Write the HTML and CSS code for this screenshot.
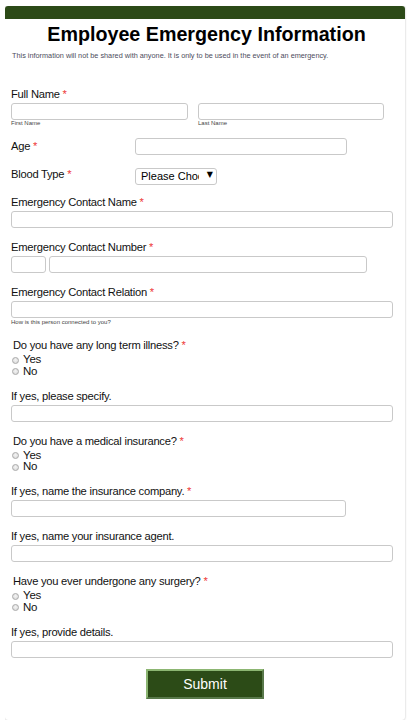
FILE: index.html
```html
<!DOCTYPE html>
<html lang="en">
<head>
<meta charset="utf-8">
<title>Employee Emergency Information</title>
<link rel="stylesheet" href="styles.css">
</head>
<body>
<form class="card">
  <div class="topbar"></div>
  <div class="content">
    <h1 class="title">Employee Emergency Information</h1>
    <p class="intro">This information will not be shared with anyone. It is only to be used in the event of an emergency.</p>

    <div class="field first">
      <label class="lbl">Full Name <span class="req">*</span></label>
      <div class="name-row">
        <div class="sub-col">
          <input class="inp w-first" type="text">
          <span class="sublbl">First Name</span>
        </div>
        <div class="sub-col">
          <input class="inp w-last" type="text">
          <span class="sublbl">Last Name</span>
        </div>
      </div>
    </div>

    <div class="row age-row">
      <label class="lbl row-lbl">Age <span class="req">*</span></label>
      <input class="inp w-age" type="text">
    </div>

    <div class="row blood-row">
      <label class="lbl row-lbl">Blood Type <span class="req">*</span></label>
      <div class="select-wrap">
        <select class="sel">
          <option>Please Choose</option>
          <option>A+</option>
          <option>A-</option>
          <option>B+</option>
          <option>B-</option>
          <option>AB+</option>
          <option>AB-</option>
          <option>O+</option>
          <option>O-</option>
        </select>
        <span class="arrow">▼</span>
      </div>
    </div>

    <div class="field">
      <label class="lbl">Emergency Contact Name <span class="req">*</span></label>
      <input class="inp w-full" type="text">
    </div>

    <div class="field">
      <label class="lbl">Emergency Contact Number <span class="req">*</span></label>
      <div class="phone-row">
        <input class="inp w-area" type="text">
        <input class="inp w-phone" type="text">
      </div>
    </div>

    <div class="field with-sub">
      <label class="lbl">Emergency Contact Relation <span class="req">*</span></label>
      <input class="inp w-full" type="text">
      <span class="sublbl sub-note">How is this person connected to you?</span>
    </div>

    <div class="question">
      <div class="lbl q-lbl">Do you have any long term illness? <span class="req">*</span></div>
      <label class="opt"><span class="radio"></span>Yes</label>
      <label class="opt"><span class="radio"></span>No</label>
    </div>

    <div class="field after-q">
      <label class="lbl">If yes, please specify.</label>
      <input class="inp w-full" type="text">
    </div>

    <div class="question">
      <div class="lbl q-lbl">Do you have a medical insurance? <span class="req">*</span></div>
      <label class="opt"><span class="radio"></span>Yes</label>
      <label class="opt"><span class="radio"></span>No</label>
    </div>

    <div class="field after-q">
      <label class="lbl">If yes, name the insurance company. <span class="req">*</span></label>
      <input class="inp w-company" type="text">
    </div>

    <div class="field">
      <label class="lbl">If yes, name your insurance agent.</label>
      <input class="inp w-full" type="text">
    </div>

    <div class="question">
      <div class="lbl q-lbl">Have you ever undergone any surgery? <span class="req">*</span></div>
      <label class="opt"><span class="radio"></span>Yes</label>
      <label class="opt"><span class="radio"></span>No</label>
    </div>

    <div class="field after-q last">
      <label class="lbl">If yes, provide details.</label>
      <input class="inp w-full" type="text">
    </div>

    <div class="actions">
      <button class="submit" type="button">Submit</button>
    </div>
  </div>
</form>
</body>
</html>
```

FILE: styles.css
```css
html, body {
  background: #ffffff;
}
body {
  margin: 6px 0 0 5px;
  font-family: "Liberation Sans", Arial, sans-serif;
  color: #111;
}
.card {
  width: 400px;
  background: #ffffff;
  border-radius: 3px;
  box-shadow: 0 0 2px rgba(0, 0, 0, 0.3);
  overflow: hidden;
}
.topbar {
  height: 13px;
  background: #2c4a17;
}
.content {
  padding: 0 6px 21px 6px;
}
.title {
  margin: 3px 0 0 0;
  font-size: 19.7px;
  line-height: 24px;
  font-weight: bold;
  text-align: center;
  color: #000;
  padding-left: 3px;
}
.intro {
  margin: 5px 0 0 0;
  padding-left: 1px;
  font-size: 7.3px;
  line-height: 9px;
  color: #4c4c5c;
}
.lbl {
  display: block;
  font-size: 11.2px;
  line-height: 13px;
  letter-spacing: -0.25px;
  color: #111;
  margin-bottom: 2px;
}
.req {
  color: #ee3b3b;
}
.inp {
  display: block;
  box-sizing: border-box;
  height: 17px;
  margin: 0;
  padding: 0 4px;
  border: 1px solid #c9c9c9;
  border-radius: 3px;
  background: #fff;
  font-family: "Liberation Sans", Arial, sans-serif;
  font-size: 11px;
  outline: none;
}
.w-full { width: 382px; }
.w-first { width: 177px; }
.w-last { width: 186px; }
.w-age { width: 212px; }
.w-area { width: 35px; }
.w-phone { width: 318px; }
.w-company { width: 335px; }

.field {
  margin-top: 13px;
}
.field.first {
  margin-top: 28px;
}
.name-row {
  display: flex;
  gap: 10px;
}
.sub-col {
  display: flex;
  flex-direction: column;
}
.sublbl {
  display: block;
  font-size: 6px;
  line-height: 7px;
  color: #444;
}
.sub-note {
  margin-top: 1px;
}
.row {
  display: flex;
  align-items: center;
  margin-top: 11px;
}
.row-lbl {
  width: 124px;
  margin-bottom: 0;
  flex: none;
}
.select-wrap {
  position: relative;
  width: 82px;
  height: 17px;
}
.sel {
  -webkit-appearance: none;
  appearance: none;
  box-sizing: border-box;
  width: 82px;
  height: 17px;
  margin: 0;
  padding: 0 17px 0 5px;
  border: 1px solid #c9c9c9;
  border-radius: 3px;
  background: #fff;
  font-family: "Liberation Sans", Arial, sans-serif;
  font-size: 11px;
  color: #000;
  outline: none;
}
.arrow {
  position: absolute;
  right: 4px;
  top: 4px;
  font-family: "DejaVu Sans", sans-serif;
  font-size: 8px;
  line-height: 10px;
  color: #000;
  pointer-events: none;
}
.phone-row {
  display: flex;
  gap: 3px;
}
.question {
  margin-top: 13px;
}
.q-lbl {
  padding-left: 2px;
}
.opt {
  display: flex;
  align-items: center;
  font-size: 11.5px;
  line-height: 11.5px;
  letter-spacing: -0.2px;
  color: #111;
  padding-left: 1px;
}
.radio {
  box-sizing: border-box;
  width: 7px;
  height: 7px;
  margin-right: 4px;
  margin-top: 1px;
  border-radius: 50%;
  border: 1px solid #a9a9a9;
  background: radial-gradient(circle at 50% 40%, #f4f4f4 0%, #d6d6d6 100%);
}
.field.after-q {
  margin-top: 12.5px;
}
.actions {
  display: flex;
  justify-content: center;
  margin-top: 11.5px;
}
.submit {
  box-sizing: border-box;
  width: 118px;
  height: 30px;
  margin: 0;
  padding: 0;
  background: #2c4b17;
  border: 2px solid;
  border-color: #8cb672 #58784a #58784a #8cb672;
  color: #ffffff;
  font-family: "Liberation Sans", Arial, sans-serif;
  font-size: 14px;
  cursor: pointer;
}
```
